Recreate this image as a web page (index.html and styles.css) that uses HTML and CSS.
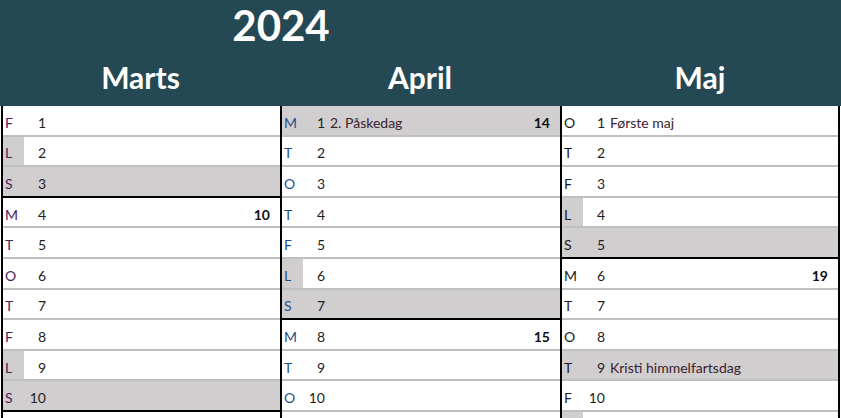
FILE: index.html
```html
<!DOCTYPE html>
<html lang="da">
<head>
<meta charset="utf-8">
<title>Kalender 2024</title>
<link rel="stylesheet" href="styles.css">
</head>
<body>
<div class="sheet">
  <header class="top">
    <div class="year-row"><span class="year">2024</span></div>
    <div class="months">
      <div class="month m1">Marts</div>
      <div class="month m2">April</div>
      <div class="month m3">Maj</div>
    </div>
  </header>
  <div class="cols">
    <div class="col c1">
      <div class="row"><span class="wd">F</span><span class="num">1</span></div>
      <div class="row sat"><span class="wd">L</span><span class="num">2</span></div>
      <div class="row sun"><span class="wd">S</span><span class="num">3</span></div>
      <div class="row"><span class="wd">M</span><span class="num">4</span><span class="name"></span><span class="wk">10</span></div>
      <div class="row"><span class="wd">T</span><span class="num">5</span></div>
      <div class="row"><span class="wd">O</span><span class="num">6</span></div>
      <div class="row"><span class="wd">T</span><span class="num">7</span></div>
      <div class="row"><span class="wd">F</span><span class="num">8</span></div>
      <div class="row sat"><span class="wd">L</span><span class="num">9</span></div>
      <div class="row sun"><span class="wd">S</span><span class="num">10</span></div>
      <div class="row"><span class="wd"></span><span class="num"></span></div>
    </div>
    <div class="col c2">
      <div class="row hol"><span class="wd">M</span><span class="num">1</span><span class="name">2. Påskedag</span><span class="wk">14</span></div>
      <div class="row"><span class="wd">T</span><span class="num">2</span></div>
      <div class="row"><span class="wd">O</span><span class="num">3</span></div>
      <div class="row"><span class="wd">T</span><span class="num">4</span></div>
      <div class="row"><span class="wd">F</span><span class="num">5</span></div>
      <div class="row sat"><span class="wd">L</span><span class="num">6</span></div>
      <div class="row sun"><span class="wd">S</span><span class="num">7</span></div>
      <div class="row"><span class="wd">M</span><span class="num">8</span><span class="name"></span><span class="wk">15</span></div>
      <div class="row"><span class="wd">T</span><span class="num">9</span></div>
      <div class="row"><span class="wd">O</span><span class="num">10</span></div>
      <div class="row"><span class="wd"></span><span class="num"></span></div>
    </div>
    <div class="col c3">
      <div class="row"><span class="wd">O</span><span class="num">1</span><span class="name">Første maj</span></div>
      <div class="row"><span class="wd">T</span><span class="num">2</span></div>
      <div class="row"><span class="wd">F</span><span class="num">3</span></div>
      <div class="row sat"><span class="wd">L</span><span class="num">4</span></div>
      <div class="row sun"><span class="wd">S</span><span class="num">5</span></div>
      <div class="row"><span class="wd">M</span><span class="num">6</span><span class="name"></span><span class="wk">19</span></div>
      <div class="row"><span class="wd">T</span><span class="num">7</span></div>
      <div class="row"><span class="wd">O</span><span class="num">8</span></div>
      <div class="row hol"><span class="wd">T</span><span class="num">9</span><span class="name">Kristi himmelfartsdag</span></div>
      <div class="row"><span class="wd">F</span><span class="num">10</span></div>
      <div class="row sat"><span class="wd"></span><span class="num"></span></div>
    </div>
  </div>
</div>
</body>
</html>
```
FILE: styles.css
```css
html, body {
  margin: 0;
  padding: 0;
  background: #ffffff;
  overflow: hidden;
}
body {
  width: 841px;
  height: 418px;
  font-family: Lato, "Open Sans", "Liberation Sans", sans-serif;
}
.sheet {
  width: 841px;
}
.top {
  background: #254954;
  height: 106px;
  color: #ffffff;
  font-weight: bold;
  display: flex;
  flex-direction: column;
}
.year-row {
  width: 562px;
  text-align: center;
  height: 50px;
  padding-top: 1px;
}
.year {
  font-size: 42px;
  line-height: 48px;
}
.months {
  display: grid;
  grid-template-columns: 279px 280px 280px;
  padding-left: 1px;
}
.month {
  text-align: center;
  font-size: 30px;
  line-height: 52px;
}
.cols {
  display: grid;
  grid-template-columns: 279px 280px 280px;
  padding-left: 1px;
  align-items: start;
}
.col {
  border-left: 2px solid #000000;
  display: flex;
  flex-direction: column;
}
.c3 {
  border-right: 2px solid #000000;
}
.row {
  box-sizing: border-box;
  height: 30.6px;
  border-bottom: 2px solid #bfbfbf;
  display: flex;
  align-items: center;
  font-size: 14px;
  color: #1e1e1e;
  padding-right: 10px;
}
.row > span {
  padding-top: 4px;
}
.row.sun {
  background: #d0cece;
  border-bottom-color: #000000;
}
.row.hol {
  background: #d0cece;
}
.wd {
  box-sizing: border-box;
  width: 21px;
  align-self: stretch;
  display: flex;
  align-items: center;
  padding-left: 2px;
}
.sat .wd {
  background: #d0cece;
}
.c1 .wd { color: #4a2159; }
.c2 .wd { color: #1f4f8a; }
.c3 .wd { color: #1a1a1a; }
.num {
  width: 22px;
  text-align: right;
}
.name {
  flex: 1;
  padding-left: 5px;
  color: #3a2230;
  white-space: nowrap;
}
.wk {
  font-weight: bold;
  color: #111111;
}
```
